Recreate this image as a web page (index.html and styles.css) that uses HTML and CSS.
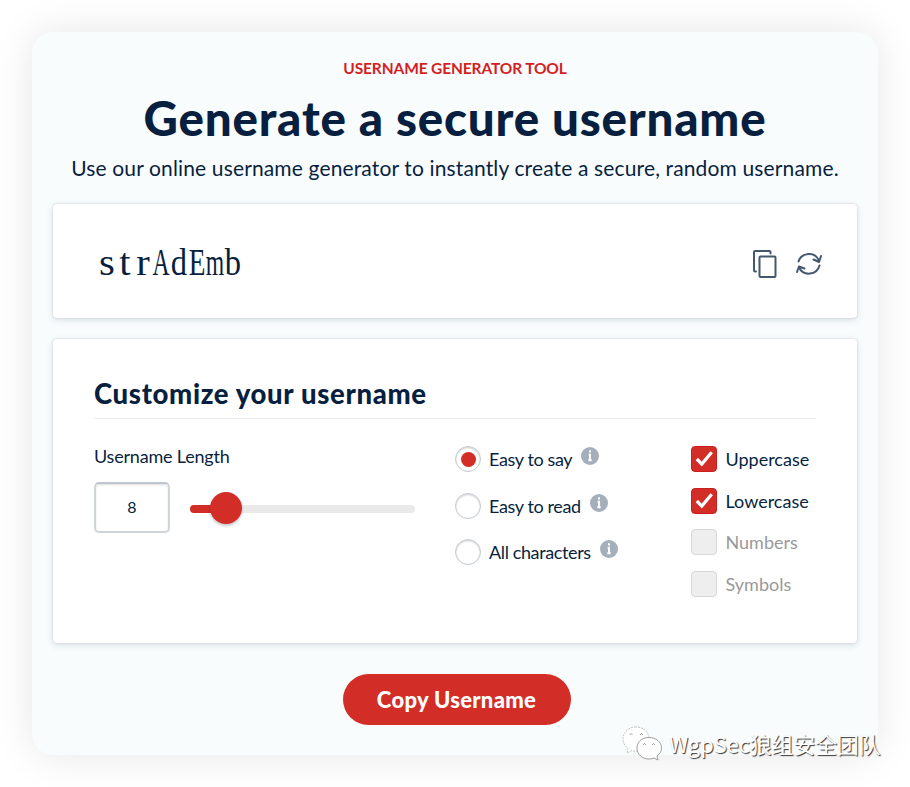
FILE: index.html
```html
<!DOCTYPE html>
<html lang="en">
<head>
<meta charset="utf-8">
<title>Username generator</title>
<link rel="stylesheet" href="styles.css">
</head>
<body>
<main class="generator">
  <p class="eyebrow">USERNAME GENERATOR TOOL</p>
  <h1>Generate a secure username</h1>
  <p class="lead">Use our online username generator to instantly create a secure, random username.</p>
  <section class="panel result">
    <div class="username"><span class="stretch">s</span><span class="stretch">t</span><span class="stretch">r</span><span class="narrow">A</span><span>d</span><span class="mid">E</span><span class="narrow">m</span><span>b</span></div>
    <svg class="copy-icon" width="26" height="30" viewBox="0 0 26 30" fill="none" stroke="#43586f" stroke-width="2" stroke-linejoin="round" stroke-linecap="round"><rect x="7.500" y="7.500" width="16" height="20.500" rx="1"/><path d="M18.500 4.500V3Q18.500 2 17.500 2H3Q2 2 2 3V21.500Q2 22.500 3 22.500H4"/></svg>
    <svg class="refresh-icon" width="28" height="28" viewBox="0 0 28 28" fill="none" stroke="#43586f" stroke-width="2" stroke-linejoin="round" stroke-linecap="round"><path d="M3.500 11.500A11 11 0 0 1 24 10.500M24.500 15.500A11 11 0 0 1 4 17.500M18.500 9.500L24 12L26 6M2 22L4 16.500L9.500 18.500"/></svg>
  </section>
  <section class="panel options">
    <h2>Customize your username</h2>
    <div class="columns">
      <div class="length">
        <label>Username Length</label>
        <div class="length-row">
          <div class="number">8</div>
          <div class="track"><div class="fill"></div><div class="thumb"></div></div>
        </div>
      </div>
      <div class="radios">
        <div class="radio"><i class="dot on"></i><span>Easy to say</span><svg class="info" viewBox="0 0 18 18"><circle cx="9" cy="9" r="9" fill="#a4afbb"/><path d="M9 3.200V5.400M7.600 7.700H9V13M7.300 13.200H10.700" stroke="#fff" stroke-width="2" fill="none"/></svg></div>
        <div class="radio"><i class="dot"></i><span>Easy to read</span><svg class="info" viewBox="0 0 18 18"><circle cx="9" cy="9" r="9" fill="#a4afbb"/><path d="M9 3.200V5.400M7.600 7.700H9V13M7.300 13.200H10.700" stroke="#fff" stroke-width="2" fill="none"/></svg></div>
        <div class="radio"><i class="dot"></i><span>All characters</span><svg class="info" viewBox="0 0 18 18"><circle cx="9" cy="9" r="9" fill="#a4afbb"/><path d="M9 3.200V5.400M7.600 7.700H9V13M7.300 13.200H10.700" stroke="#fff" stroke-width="2" fill="none"/></svg></div>
      </div>
      <div class="checks">
        <div class="check"><i class="box on"><svg viewBox="0 0 25 25"><path d="M5 12.500L10.200 17.800L20.500 5.500" fill="none" stroke="#fff" stroke-width="3.400"/></svg></i><span>Uppercase</span></div>
        <div class="check"><i class="box on"><svg viewBox="0 0 25 25"><path d="M5 12.500L10.200 17.800L20.500 5.500" fill="none" stroke="#fff" stroke-width="3.400"/></svg></i><span>Lowercase</span></div>
        <div class="check off"><i class="box"></i><span>Numbers</span></div>
        <div class="check off"><i class="box"></i><span>Symbols</span></div>
      </div>
    </div>
  </section>
  <button class="copy">Copy Username</button>
</main>
<div class="watermark">
  <svg width="40" height="36" viewBox="0 0 40 36" fill="#fff" stroke="#777" stroke-width=".7"><path stroke="#aaa" stroke-dasharray="2 1" d="M14 1C6 1 1 6.500 1 13C1 17 3 20 6 22.500L5 27L10 24.500Q13 25.500 17 25C26 23 28 18 27 11C25 4 20 1 14 1Z"/><path d="M27 11.500C19 11.500 15 16.500 15 22C15 29 21 33 27 33Q30 33 32 32L36 34L35 30C38 28 39.500 25 39.500 22C39.500 16 34 11.500 27 11.500Z"/><path fill="none" d="M7.500 9Q9 6 10.500 9M18 9Q19.500 6 21 9M21 19Q22.500 16 24 19M30 19Q31.500 16 33 19"/></svg>
  <span>WgpSec狼组安全团队</span>
</div>
</body>
</html>
```
FILE: styles.css
```css
* { box-sizing: border-box; }
body { margin: 0; padding: 32px; height: 787px; overflow: hidden; background: #fff; color: #081f3f; font-family: Lato, "Liberation Sans", sans-serif; }
h1, h2, p { margin: 0; white-space: nowrap; }
.generator { width: 846px; height: 723px; padding: 25px 21px 0; border-radius: 21px; background: #f8fcfd; box-shadow: 0 0 40px rgba(0, 0, 0, .1); display: flex; flex-direction: column; align-items: center; }
.eyebrow { height: 22px; line-height: 22px; font-size: 15.500px; letter-spacing: -.13px; font-weight: 700; color: #d51f1f; }
h1 { height: 66px; line-height: 77px; font-size: 47.500px; letter-spacing: .8px; font-weight: 900; }
.lead { height: 59px; line-height: 46px; font-size: 21px; letter-spacing: .14px; }
.panel { width: 804px; background: #fff; border-radius: 4px; box-shadow: 0 0 2px rgba(30, 40, 60, .2), 0 2px 7px rgba(30, 40, 60, .14); flex: none; }
.result { height: 114px; display: flex; align-items: center; padding: 0 34px 0 45px; gap: 17px; }
.username { display: flex; margin-right: auto; height: 44px; line-height: 48px; font-family: "Liberation Serif", serif; font-size: 37px; }
.username span { width: 18px; display: flex; justify-content: center; transform: scaleX(.88); }
.username .stretch { transform: scaleX(1.100); }
.username .narrow { transform: scaleX(.64); }
.username .mid { transform: scaleX(.74); }
.copy-icon { margin-top: 5px; }
.refresh-icon { margin-top: 6px; }
.options { height: 304px; margin-top: 21px; padding: 33px 41px 0; }
h2 { height: 47px; line-height: 43px; font-size: 27.500px; letter-spacing: .65px; font-weight: 900; border-bottom: 1px solid #e9ebed; }
.columns { display: grid; grid-template-columns: 361px 236px 1fr; font-size: 18px; white-space: nowrap; }
.length { padding-top: 25px; }
.length label { display: block; height: 24px; line-height: 24px; letter-spacing: -.2px; }
.length-row { display: flex; align-items: center; gap: 20px; margin-top: 14px; }
.number { width: 76px; height: 51px; border: 2px solid #d0d5da; border-top-color: #bfc6ce; border-radius: 5px; text-align: center; line-height: 45px; font-size: 16px; box-shadow: inset 0 1px 2px #ddd; }
.track { position: relative; width: 225px; height: 8px; margin-top: 3px; border-radius: 4px; background: #e9e9e9; }
.fill { width: 36px; height: 8px; border-radius: 4px; background: #d32d27; }
.thumb { position: absolute; left: 20px; top: -13px; width: 32px; height: 32px; border-radius: 50%; background: #d32d27; box-shadow: 0 2px 3px rgba(0, 0, 0, .22); }
.radios { padding-top: 27px; }
.radio { display: flex; height: 46.500px; line-height: 26px; letter-spacing: -.38px; }
.dot { width: 26px; height: 26px; margin-right: 8px; border: 1.500px solid #c3c9d0; border-radius: 50%; background: #fff; box-shadow: inset 0 1px 2px #ccc; display: flex; align-items: center; justify-content: center; }
.dot.on::after { content: ""; width: 15px; height: 15px; border-radius: 50%; background: #d32d27; }
.info { width: 18px; height: 18px; margin: 1px 0 0 9px; }
.checks { padding-top: 27px; }
.check { display: flex; height: 41.600px; line-height: 26px; }
.box { width: 26px; height: 26px; margin-right: 8.500px; border: 1px solid #d5d7d9; border-radius: 4px; background: #eee; }
.box.on { background: #d32d27; border-color: #c9201d; }
.box svg { display: block; width: 24px; height: 24px; }
.off { color: #999; }
.copy { width: 228px; height: 51px; margin: 31px 0 0 3px; padding: 0; border: 0; border-radius: 26px; background: #d32d27; color: #fff; font: 900 22px/51px Lato, sans-serif; letter-spacing: .3px; white-space: nowrap; }
.watermark { position: absolute; left: 622px; top: 726px; display: flex; color: #fff; font: 21.800px/36px "Noto Sans CJK SC", sans-serif; text-shadow: 1px 1px 1px #333; white-space: nowrap; gap: 7px; }
```
